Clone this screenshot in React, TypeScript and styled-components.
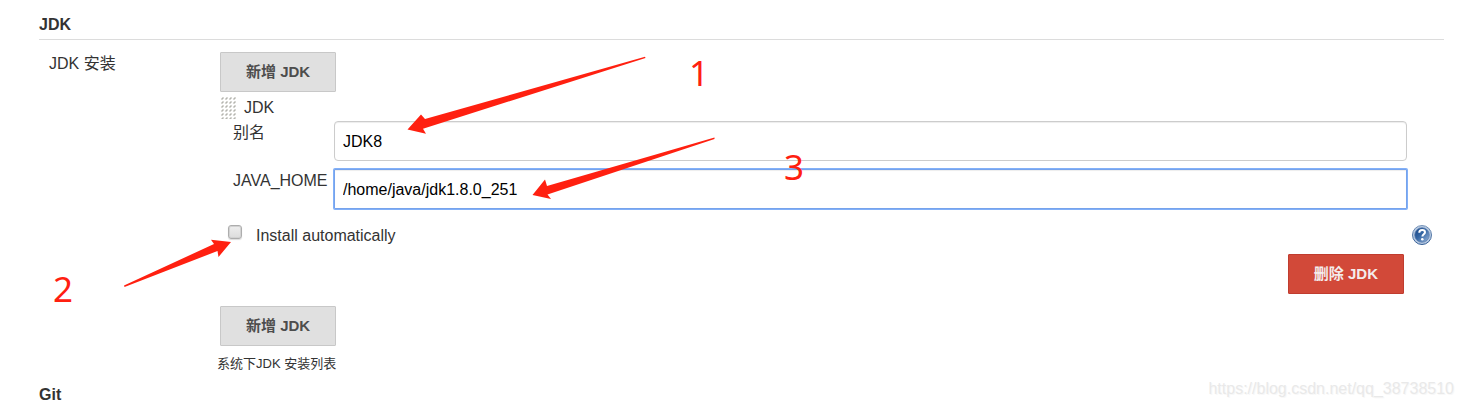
import React from "react";
import styled, { createGlobalStyle } from "styled-components";

const GlobalStyle = createGlobalStyle`
  * { box-sizing: border-box; }
  body {
    margin: 0;
    background: #fff;
    color: #333;
    font: 16px/24px "Liberation Sans", "Noto Sans CJK SC", sans-serif;
  }
`;

const Page = styled.main`
  position: relative;
  padding: 13px 20px 0 39px;
`;

const Heading = styled.h2<{ $ruled?: boolean }>`
  margin: 0;
  padding-bottom: 2px;
  font-size: 16px;
  line-height: 24px;
  font-weight: bold;
  border-bottom: ${(p) => (p.$ruled ? "1px solid #dcdcdc" : "0")};
`;

const Setting = styled.section`
  display: grid;
  grid-template-columns: 181px minmax(0, 1fr);
  padding: 12px 0 7px;
`;

const SettingLabel = styled.div`
  padding-left: 10px;
`;

const Button = styled.button<{ $danger?: boolean }>`
  display: block;
  height: 40px;
  padding: 0 25px;
  border: 1px solid ${(p) => (p.$danger ? "#c03c2f" : "#c8c8c8")};
  border-radius: 1px;
  background: ${(p) => (p.$danger ? "#d24939" : "#e0e0e0")};
  color: ${(p) => (p.$danger ? "#f3ecec" : "#4d4d4d")};
  font: bold 15px/24px "Liberation Sans", "Noto Sans CJK SC", sans-serif;
  white-space: nowrap;
`;

const Installation = styled.div`
  margin-right: 12px;
  padding: 4px 0 12px;
`;

const DragRow = styled.div`
  display: flex;
  gap: 8px;
  align-items: center;
  padding-left: 1px;
`;

const Fields = styled.div`
  display: grid;
  grid-template-columns: 101px minmax(0, 1fr);
  row-gap: 8px;
  margin: 1px 25px 0 0;
  padding-left: 13px;
`;

const FieldLabel = styled.label`
  white-space: nowrap;
`;

const TextInput = styled.input<{ $active?: boolean }>`
  width: 100%;
  height: 40px;
  padding: 2px 8px 0;
  border: 1px solid ${(p) => (p.$active ? "#76a3ec" : "#ccc")};
  border-radius: ${(p) => (p.$active ? "1px" : "4px")};
  outline: 0;
  box-shadow: inset 0 1px 1px rgba(0, 0, 0, 0.075)${(p) => (p.$active ? ", 0 0 0 1px #82b0f8" : "")};
  background: #fff;
  color: #000;
  font: 16px/24px "Liberation Sans", "Noto Sans CJK SC", sans-serif;
`;

const OptionRow = styled.div`
  display: flex;
  justify-content: space-between;
  align-items: flex-start;
  height: 24px;
  margin-top: 15px;
  padding-left: 8px;
`;

const CheckLabel = styled.label`
  display: flex;
  gap: 14px;
  align-items: flex-start;
`;

const Checkbox = styled.input`
  appearance: none;
  width: 14px;
  height: 14px;
  margin: 1px 0 0;
  border: 1px solid #adadad;
  border-radius: 3px;
  background: linear-gradient(#eee, #dcdcdc);
  box-shadow: 0 1px 1px #ddd, inset 0 0 0 1px #d2d2d2;
`;

const HelpLink = styled.a`
  display: block;
  height: 20px;
  margin-top: 1px;
`;

const Actions = styled.div`
  display: flex;
  justify-content: flex-end;
  padding: 6px 28px 0 0;
`;

const Note = styled.div`
  margin: 6px 0 0 -3px;
  font-size: 13px;
`;

const Annotations = styled.svg`
  position: absolute;
  top: 0;
  left: 0;
  pointer-events: none;
  fill: #ff2010;
  font: 35px "Noto Sans", sans-serif;
`;

const Watermark = styled.div`
  position: absolute;
  right: 10px;
  bottom: 8px;
  color: #e9e9e9;
  text-shadow: 1px 1px 0 #f8f8f8;
`;

const GripIcon = () => (
  <svg width="15" height="22" aria-hidden="true">
    <defs>
      <pattern id="grip" width="4" height="4" patternUnits="userSpaceOnUse">
        <path d="M1 0h2v2H2v1H0V1h1z" fill="#d8d8d4" />
        <path d="M1 1h1v1H1z" fill="#b4b4b0" />
      </pattern>
    </defs>
    <rect width="15" height="22" fill="url(#grip)" />
  </svg>
);

const HelpIcon = () => (
  <svg width="20" height="20" viewBox="0 0 20 20" aria-hidden="true">
    <defs>
      <linearGradient id="ball" x1="0" y1="0" x2="1" y2="1">
        <stop offset="0" stopColor="#184484" />
        <stop offset=".45" stopColor="#3466a4" />
        <stop offset="1" stopColor="#9eb8da" />
      </linearGradient>
      <linearGradient id="rim" x1="0" y1="0" x2="0" y2="1">
        <stop offset="0" stopColor="#7895ba" />
        <stop offset="1" stopColor="#315c94" />
      </linearGradient>
    </defs>
    <circle cx="10" cy="10" r="9.5" fill="#b8cae2" stroke="url(#rim)" />
    <circle cx="10" cy="10" r="7.3" fill="url(#ball)" stroke="#5b7eae" strokeWidth=".7" />
    <path
      d="M7.3 7.7C7.3 5.8 8.5 5 10.1 5c1.8 0 2.9.9 2.9 2.3 0 2-2.6 2.1-2.6 4.3"
      fill="none"
      stroke="#fff"
      strokeWidth="2"
    />
    <circle cx="10.3" cy="14.3" r="1.3" fill="#fff" />
  </svg>
);

export default function App() {
  return (
    <>
      <GlobalStyle />
      <Page>
        <Heading $ruled>JDK</Heading>
        <Setting>
          <SettingLabel>JDK 安装</SettingLabel>
          <div>
            <Button type="button">新增 JDK</Button>
            <Installation>
              <DragRow>
                <GripIcon />
                <span>JDK</span>
              </DragRow>
              <Fields>
                <FieldLabel htmlFor="alias">别名</FieldLabel>
                <TextInput id="alias" defaultValue="JDK8" />
                <FieldLabel htmlFor="java-home">JAVA_HOME</FieldLabel>
                <TextInput id="java-home" $active defaultValue="/home/java/jdk1.8.0_251" />
              </Fields>
              <OptionRow>
                <CheckLabel>
                  <Checkbox type="checkbox" />
                  <span>Install automatically</span>
                </CheckLabel>
                <HelpLink href="#help" aria-label="Help">
                  <HelpIcon />
                </HelpLink>
              </OptionRow>
              <Actions>
                <Button type="button" $danger>删除 JDK</Button>
              </Actions>
            </Installation>
            <Button type="button">新增 JDK</Button>
            <Note>系统下JDK 安装列表</Note>
          </div>
        </Setting>
        <Heading>Git</Heading>
        <Annotations width="830" height="320">
          <path d="M645 56.7 425 119l-4-4.5L407.500 129.500l18.500 4.200-3-5L645.500 58z" />
          <path d="M714.500 137.500 547 186l-2-6.500L532.500 195l18.500 4-3.500-4.500L714.500 139z" />
          <path d="M124 285.500 214 244l-3-4.300 20 2.300-12.500 15-1-6L124.500 287z" />
          <text x="689" y="86">1</text>
          <text x="53" y="302">2</text>
          <text x="784" y="180">3</text>
        </Annotations>
        <Watermark>https://blog.csdn.net/qq_38738510</Watermark>
      </Page>
    </>
  );
}
